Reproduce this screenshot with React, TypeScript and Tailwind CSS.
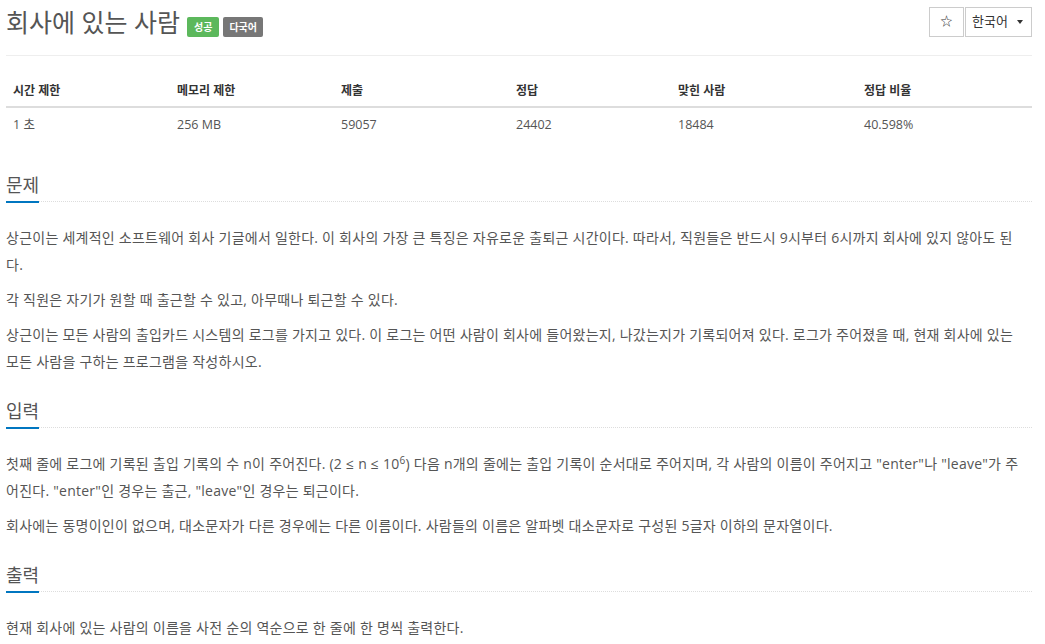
import React from "react";

const font = { fontFamily: '"Open Sans", "Noto Sans CJK KR", sans-serif' };

function Heading({ children }: { children: React.ReactNode }) {
  return (
    <div className="border-b border-dotted border-[#ddd] flex">
      <h2 className="text-[18px] leading-[28px] text-[#555] font-normal border-b-2 border-[#0076c0] -mb-[2px] pb-[2px]">{children}</h2>
    </div>
  );
}

const body = "mt-[22px] pr-[6px] text-[14px] leading-[27px] tracking-[0.25px]";

export default function App() {
  const cols = [
    { h: "시간 제한", v: "1 초", w: "w-[164px]" },
    { h: "메모리 제한", v: "256 MB", w: "w-[164px]" },
    { h: "제출", v: "59057", w: "w-[175px]" },
    { h: "정답", v: "24402", w: "w-[162px]" },
    { h: "맞힌 사람", v: "18484", w: "w-[186px]" },
    { h: "정답 비율", v: "40.598%", w: "flex-1" },
  ];
  return (
    <div className="bg-white w-[1045px] h-[644px] overflow-hidden pl-[6px] pr-[13px] text-[#555]" style={font}>
      <div className="flex justify-between items-start border-b border-[#eee] h-[56px]">
        <div className="flex items-start pt-[5px]">
          <h1 className="text-[25px] leading-[34px] text-[#555] font-normal">회사에 있는 사람</h1>
          <span className="ml-[7px] mt-[12px] bg-[#5cb85c] text-white text-[10px] font-bold px-[7px] h-[20px] leading-[20px] rounded-[2px]">성공</span>
          <span className="ml-[4px] mt-[12px] bg-[#777] text-white text-[10px] font-bold px-[6px] h-[20px] leading-[20px] rounded-[2px]">다국어</span>
        </div>
        <div className="flex mt-[7px]">
          <div className="w-[35px] h-[30px] border border-[#ccc] flex items-center justify-center text-[12px] text-[#333]">☆</div>
          <div className="w-[67px] h-[30px] border border-[#ccc] ml-[1px] flex items-center justify-between pl-[6px] pr-[8px] text-[13px] text-[#333]">
            <span>한국어</span>
            <span className="w-0 h-0 border-l-[3px] border-r-[3px] border-t-[4px] border-l-transparent border-r-transparent border-t-[#333]"></span>
          </div>
        </div>
      </div>

      <div className="mt-[22px]">
        <div className="flex border-b-2 border-[#ddd] h-[30px] items-start">
          {cols.map((c) => (
            <div key={c.h} className={`${c.w} pl-[7px] text-[12px] font-bold text-[#333] leading-[26px]`}>{c.h}</div>
          ))}
        </div>
        <div className="flex h-[35px] items-center">
          {cols.map((c) => (
            <div key={c.h} className={`${c.w} pl-[7px] text-[12.5px] text-[#555]`}>{c.v}</div>
          ))}
        </div>
      </div>

      <div className="mt-[28px]">
        <Heading>문제</Heading>
        <div className={body}>
          <p className="mb-[8px]">상근이는 세계적인 소프트웨어 회사 기글에서 일한다. 이 회사의 가장 큰 특징은 자유로운 출퇴근 시간이다. 따라서, 직원들은 반드시 9시부터 6시까지 회사에 있지 않아도 된다.</p>
          <p className="mb-[8px]">각 직원은 자기가 원할 때 출근할 수 있고, 아무때나 퇴근할 수 있다.</p>
          <p className="mb-[8px]">상근이는 모든 사람의 출입카드 시스템의 로그를 가지고 있다. 이 로그는 어떤 사람이 회사에 들어왔는지, 나갔는지가 기록되어져 있다. 로그가 주어졌을 때, 현재 회사에 있는 모든 사람을 구하는 프로그램을 작성하시오.</p>
        </div>
      </div>

      <div className="mt-[22px]">
        <Heading>입력</Heading>
        <div className={body}>
          <p className="mb-[8px]">첫째 줄에 로그에 기록된 출입 기록의 수 n이 주어진다. (2 ≤ n ≤ 10<span className="text-[10px] leading-none align-[5px]">6</span>) 다음 n개의 줄에는 출입 기록이 순서대로 주어지며, 각 사람의 이름이 주어지고 "enter"나 "leave"가 주어진다. "enter"인 경우는 출근, "leave"인 경우는 퇴근이다.</p>
          <p className="mb-[8px]">회사에는 동명이인이 없으며, 대소문자가 다른 경우에는 다른 이름이다. 사람들의 이름은 알파벳 대소문자로 구성된 5글자 이하의 문자열이다.</p>
        </div>
      </div>

      <div className="mt-[22px]">
        <Heading>출력</Heading>
        <div className={body}>
          <p className="mb-[8px]">현재 회사에 있는 사람의 이름을 사전 순의 역순으로 한 줄에 한 명씩 출력한다.</p>
        </div>
      </div>
    </div>
  );
}
